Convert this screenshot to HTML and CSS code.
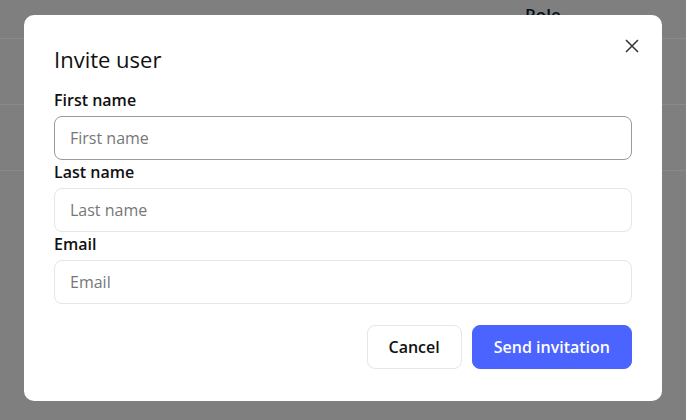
FILE: index.html
```html
<!DOCTYPE html>
<html lang="en">
<head>
    <meta charset="UTF-8">
    <meta name="viewport" content="width=device-width, initial-scale=1.0">
    <title>Users</title>
    <link rel="stylesheet" href="styles.css">
</head>
<body>
    <div class="users-page">
        <div class="users-table">
            <div class="table-head">
                <span class="col-name"></span>
                <span class="col-role">Role</span>
            </div>
            <div class="table-row"></div>
            <div class="table-row"></div>
        </div>
    </div>

    <div class="backdrop">
        <div class="modal">
            <button class="close-button" aria-label="Close">
                <svg width="14" height="14" viewBox="0 0 14 14">
                    <path d="M1 1L13 13M13 1L1 13" stroke="#333" stroke-width="1.5" fill="none"/>
                </svg>
            </button>
            <h2 class="modal-title">Invite user</h2>
            <form class="invite-form">
                <label class="field-label" for="firstName">First name</label>
                <input class="field-input field-active" type="text" id="firstName" placeholder="First name">
                <label class="field-label" for="lastName">Last name</label>
                <input class="field-input" type="text" id="lastName" placeholder="Last name">
                <label class="field-label" for="email">Email</label>
                <input class="field-input" type="email" id="email" placeholder="Email">
                <div class="button-row">
                    <button type="button" class="cancel-button">Cancel</button>
                    <button type="button" class="send-button">Send invitation</button>
                </div>
            </form>
        </div>
    </div>
</body>
</html>
```

FILE: styles.css
```css
body {
    margin: 0;
    font-family: "Open Sans", "Noto Sans", Arial, sans-serif;
    background: #ebebeb;
}
.users-page {
    height: 420px;
}
.table-head {
    display: flex;
    height: 38px;
    border-bottom: 1px solid #fff;
}
.col-name {
    width: 525px;
}
.col-role {
    margin-top: 3px;
    font-size: 17px;
    font-weight: 600;
    color: #0d1530;
}
.table-row {
    height: 65px;
    border-bottom: 1px solid #fff;
}
.backdrop {
    position: fixed;
    inset: 0;
    background: rgba(0, 0, 0, 0.46);
    display: flex;
    justify-content: center;
    align-items: flex-start;
    padding-top: 15px;
}
.modal {
    position: relative;
    width: 638px;
    box-sizing: border-box;
    background: #fff;
    border-radius: 10px;
    padding: 30px 30px 32px;
}
.close-button {
    position: absolute;
    top: 19px;
    right: 18px;
    width: 24px;
    height: 24px;
    border: none;
    background: none;
    padding: 0;
    display: flex;
    align-items: center;
    justify-content: center;
    cursor: pointer;
}
.modal-title {
    margin: 0 0 15px;
    font-size: 22px;
    font-weight: 500;
    line-height: 28px;
    color: #111;
}
.invite-form {
    display: flex;
    flex-direction: column;
}
.field-label {
    font-size: 16px;
    font-weight: 600;
    line-height: 24px;
    margin-bottom: 4px;
    color: #111;
}
.field-input {
    height: 44px;
    box-sizing: border-box;
    border: 1px solid #e6e6e6;
    border-radius: 8px;
    padding: 0 15px;
    font-family: inherit;
    font-size: 16px;
    color: #111;
    outline: none;
}
.field-input::placeholder {
    color: #777;
}
.field-active {
    border-color: #9a9a9a;
}
.button-row {
    display: flex;
    justify-content: flex-end;
    gap: 10px;
    margin-top: 21px;
}
.button-row button {
    height: 44px;
    padding: 0 21px;
    border-radius: 8px;
    font-family: inherit;
    font-size: 16px;
    font-weight: 600;
    cursor: pointer;
}
.cancel-button {
    background: #fff;
    border: 1px solid #e6e6e6;
    color: #111;
}
.send-button {
    background: #4b63ff;
    border: 1px solid #4b63ff;
    color: #fff;
}
.send-button:hover {
    background: #3a50e6;
}
```
